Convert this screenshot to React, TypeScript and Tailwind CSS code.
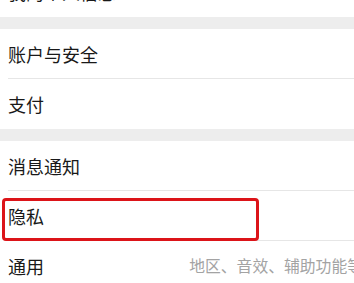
import React from "react";

function Row({ label, sub, divider = true, children }: { label: string; sub?: string; divider?: boolean; children?: React.ReactNode }) {
  return (
    <div className="relative h-[50px] flex items-center pl-[8px] bg-white">
      <span className="text-[18px] leading-none text-[#191919]">{label}</span>
      {sub && (
        <span className="ml-auto text-[15.8px] leading-none text-[#a3a3a3] whitespace-nowrap pl-[20px] -mr-[9px]">{sub}</span>
      )}
      {divider && <div className="absolute left-[8px] right-0 bottom-0 h-px bg-[#e6e6e6]" />}
      {children}
    </div>
  );
}

export default function App() {
  return (
    <div className="w-[354px] h-[283px] overflow-hidden bg-white font-['Noto_Sans_CJK_SC',sans-serif]">
      <div className="-mt-[33px] flex flex-col">
        <Row label="我的个人信息" divider={false} />
        <div className="h-[12px] bg-[#ededed]" />
        <Row label="账户与安全" />
        <Row label="支付" divider={false} />
        <div className="h-[12px] bg-[#ededed]" />
        <Row label="消息通知" />
        <Row label="隐私">
          <div className="absolute left-[2px] top-[7px] w-[257px] h-[43px] border-[3px] border-[#dc1419] rounded-[4px]" />
        </Row>
        <Row label="通用" sub="地区、音效、辅助功能等" divider={false} />
      </div>
    </div>
  );
}
